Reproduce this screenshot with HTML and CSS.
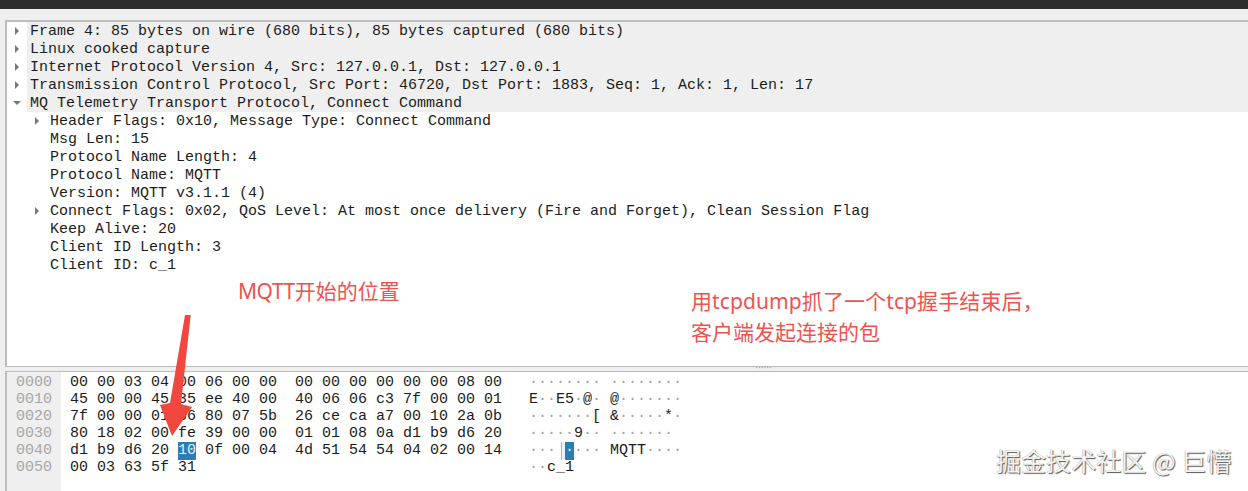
FILE: index.html
```html
<!DOCTYPE html>
<html lang="zh">
<head>
<meta charset="utf-8">
<title>Wireshark MQTT</title>
<link rel="stylesheet" href="styles.css">
</head>
<body>
<div class="app">
  <div class="topbar"></div>
  <div class="tree">
    <div class="row head"><i class="tri right"></i><span>Frame 4: 85 bytes on wire (680 bits), 85 bytes captured (680 bits)</span></div>
    <div class="row head"><i class="tri right"></i><span>Linux cooked capture</span></div>
    <div class="row head"><i class="tri right"></i><span>Internet Protocol Version 4, Src: 127.0.0.1, Dst: 127.0.0.1</span></div>
    <div class="row head"><i class="tri right"></i><span>Transmission Control Protocol, Src Port: 46720, Dst Port: 1883, Seq: 1, Ack: 1, Len: 17</span></div>
    <div class="row head"><i class="tri down"></i><span>MQ Telemetry Transport Protocol, Connect Command</span></div>
    <div class="row sub"><i class="tri right"></i><span>Header Flags: 0x10, Message Type: Connect Command</span></div>
    <div class="row sub"><i class="tri none"></i><span>Msg Len: 15</span></div>
    <div class="row sub"><i class="tri none"></i><span>Protocol Name Length: 4</span></div>
    <div class="row sub"><i class="tri none"></i><span>Protocol Name: MQTT</span></div>
    <div class="row sub"><i class="tri none"></i><span>Version: MQTT v3.1.1 (4)</span></div>
    <div class="row sub"><i class="tri right"></i><span>Connect Flags: 0x02, QoS Level: At most once delivery (Fire and Forget), Clean Session Flag</span></div>
    <div class="row sub"><i class="tri none"></i><span>Keep Alive: 20</span></div>
    <div class="row sub"><i class="tri none"></i><span>Client ID Length: 3</span></div>
    <div class="row sub"><i class="tri none"></i><span>Client ID: c_1</span></div>
  </div>
  <div class="splitter"><span class="grip">······</span></div>
  <div class="hex">
    <div class="offsets">
      <div>0000</div><div>0010</div><div>0020</div><div>0030</div><div>0040</div><div>0050</div>
    </div>
    <div class="bytes">
      <div class="line"><span class="h">00 00 03 04 00 06 00 00  00 00 00 00 00 00 08 00</span><span class="a"><b>········ ········</b></span></div>
      <div class="line"><span class="h">45 00 00 45 35 ee 40 00  40 06 06 c3 7f 00 00 01</span><span class="a">E<b>··</b>E5<b>·</b>@<b>·</b> @<b>·······</b></span></div>
      <div class="line"><span class="h">7f 00 00 01 b6 80 07 5b  26 ce ca a7 00 10 2a 0b</span><span class="a"><b>·······</b>[ &amp;<b>·····</b>*<b>·</b></span></div>
      <div class="line"><span class="h">80 18 02 00 fe 39 00 00  01 01 08 0a d1 b9 d6 20</span><span class="a"><b>·····</b>9<b>··</b> <b>·······</b></span></div>
      <div class="line"><span class="h">d1 b9 d6 20 <em class="sel">10</em> 0f 00 04  4d 51 54 54 04 02 00 14</span><span class="a"><b>···</b><u class="hover"> </u><em class="sel">·</em><b>···</b> MQTT<b>····</b></span></div>
      <div class="line"><span class="h">00 03 63 5f 31                                  </span><span class="a"><b>··</b>c_1</span></div>
    </div>
  </div>
</div>
<p class="note note-start"><span class="latin-tight">MQTT</span>开始的位置</p>
<p class="note note-desc"><span class="wide">用tcpdump抓了一个tcp握手结束后，</span><br>客户端发起连接的包</p>
<svg class="arrow" width="50" height="130" viewBox="0 0 50 130">
  <polygon points="25,5 30.700,5 21,94 32,97 12,126 0,95 10,93" fill="#f0483e"/>
</svg>
<p class="mark">掘金技术社区 @ 巨懵</p>
</body>
</html>
```
FILE: styles.css
```css
* { box-sizing: border-box; }
html, body { margin: 0; padding: 0; }
body {
  width: 1248px;
  height: 491px;
  overflow: hidden;
  background: #fff;
  position: relative;
  font-family: "Liberation Mono", "DejaVu Sans Mono", monospace;
  font-size: 15px;
  color: #1c1c1c;
}
.app {
  display: flex;
  flex-direction: column;
  height: 491px;
  background: #efefef;
}
.topbar { height: 9px; background: #2c2c2c; flex: none; }
.tree {
  flex: none;
  height: 346px;
  margin: 11px 0 0 5px;
  background: #fff;
  border-top: 2px solid #bdbdbd;
  border-left: 2px solid #bdbdbd;
}
.row {
  display: flex;
  align-items: center;
  height: 18px;
  white-space: pre;
}
.row.head { background: linear-gradient(to right, #fff 20px, #efefef 20px); padding-left: 6px; }
.row.sub { padding-left: 26px; }
.tri { flex: none; width: 17px; height: 18px; display: block; position: relative; }
.tri.right::before {
  content: "";
  position: absolute;
  left: 2px;
  top: 5px;
  border-left: 4px solid #777;
  border-top: 4px solid transparent;
  border-bottom: 4px solid transparent;
}
.tri.down::before {
  content: "";
  position: absolute;
  left: 0;
  top: 7px;
  border-top: 4px solid #777;
  border-left: 4px solid transparent;
  border-right: 4px solid transparent;
}
.splitter {
  flex: none;
  height: 6px;
  margin-left: 5px;
  padding-left: 272px;
  border-top: 1px solid #bcbcbc;
  border-bottom: 1px solid #bcbcbc;
  background: #efefef;
  font-size: 8px;
  line-height: 2px;
  color: #999;
  text-align: center;
}
.grip { letter-spacing: -2px; display: block; }
.hex {
  flex: 1;
  display: flex;
  margin-left: 5px;
  background: #fff;
  border-left: 2px solid #bdbdbd;
  min-height: 0;
}
.offsets {
  flex: none;
  width: 54px;
  background: #efefef;
  color: #a6a6a6;
  padding: 2px 0 0 9px;
}
.offsets div { height: 17px; line-height: 17px; }
.bytes { padding: 2px 0 0 9px; }
.line { display: flex; height: 17px; line-height: 17px; white-space: pre; }
.h { display: block; width: 459px; flex: none; }
.a { display: block; }
.a b { font-weight: 400; color: #a0a0a0; }
em.sel {
  font-style: normal;
  background: #2b7db4;
  color: #dff1ff;
  padding-bottom: 1px;
}
u.hover {
  text-decoration: none;
  padding-bottom: 1px;
  background: linear-gradient(to right, transparent 5px, #9fb8cc 5px, #9fb8cc 6px, #eef3f8 6px);
}
.note {
  position: absolute;
  margin: 0;
  color: #ef5350;
  font-family: "Noto Sans", "Noto Sans CJK SC", sans-serif;
  font-size: 21px;
  line-height: 31px;
  white-space: nowrap;
}
.latin-tight { letter-spacing: -0.45px; }
.wide { letter-spacing: 0.1px; }
.note-start { left: 238px; top: 276px; }
.note-desc { left: 691px; top: 286px; }
.arrow { position: absolute; left: 160px; top: 310px; }
.mark {
  position: absolute;
  left: 996px;
  top: 442px;
  margin: 0;
  font-family: "Noto Sans CJK SC", sans-serif;
  font-size: 25px;
  line-height: 36px;
  letter-spacing: 0.05px;
  color: #f2f2f2;
  text-shadow: 1px 1px 1px #555, -0.5px -0.5px 0 #bbb;
  white-space: nowrap;
}
```
